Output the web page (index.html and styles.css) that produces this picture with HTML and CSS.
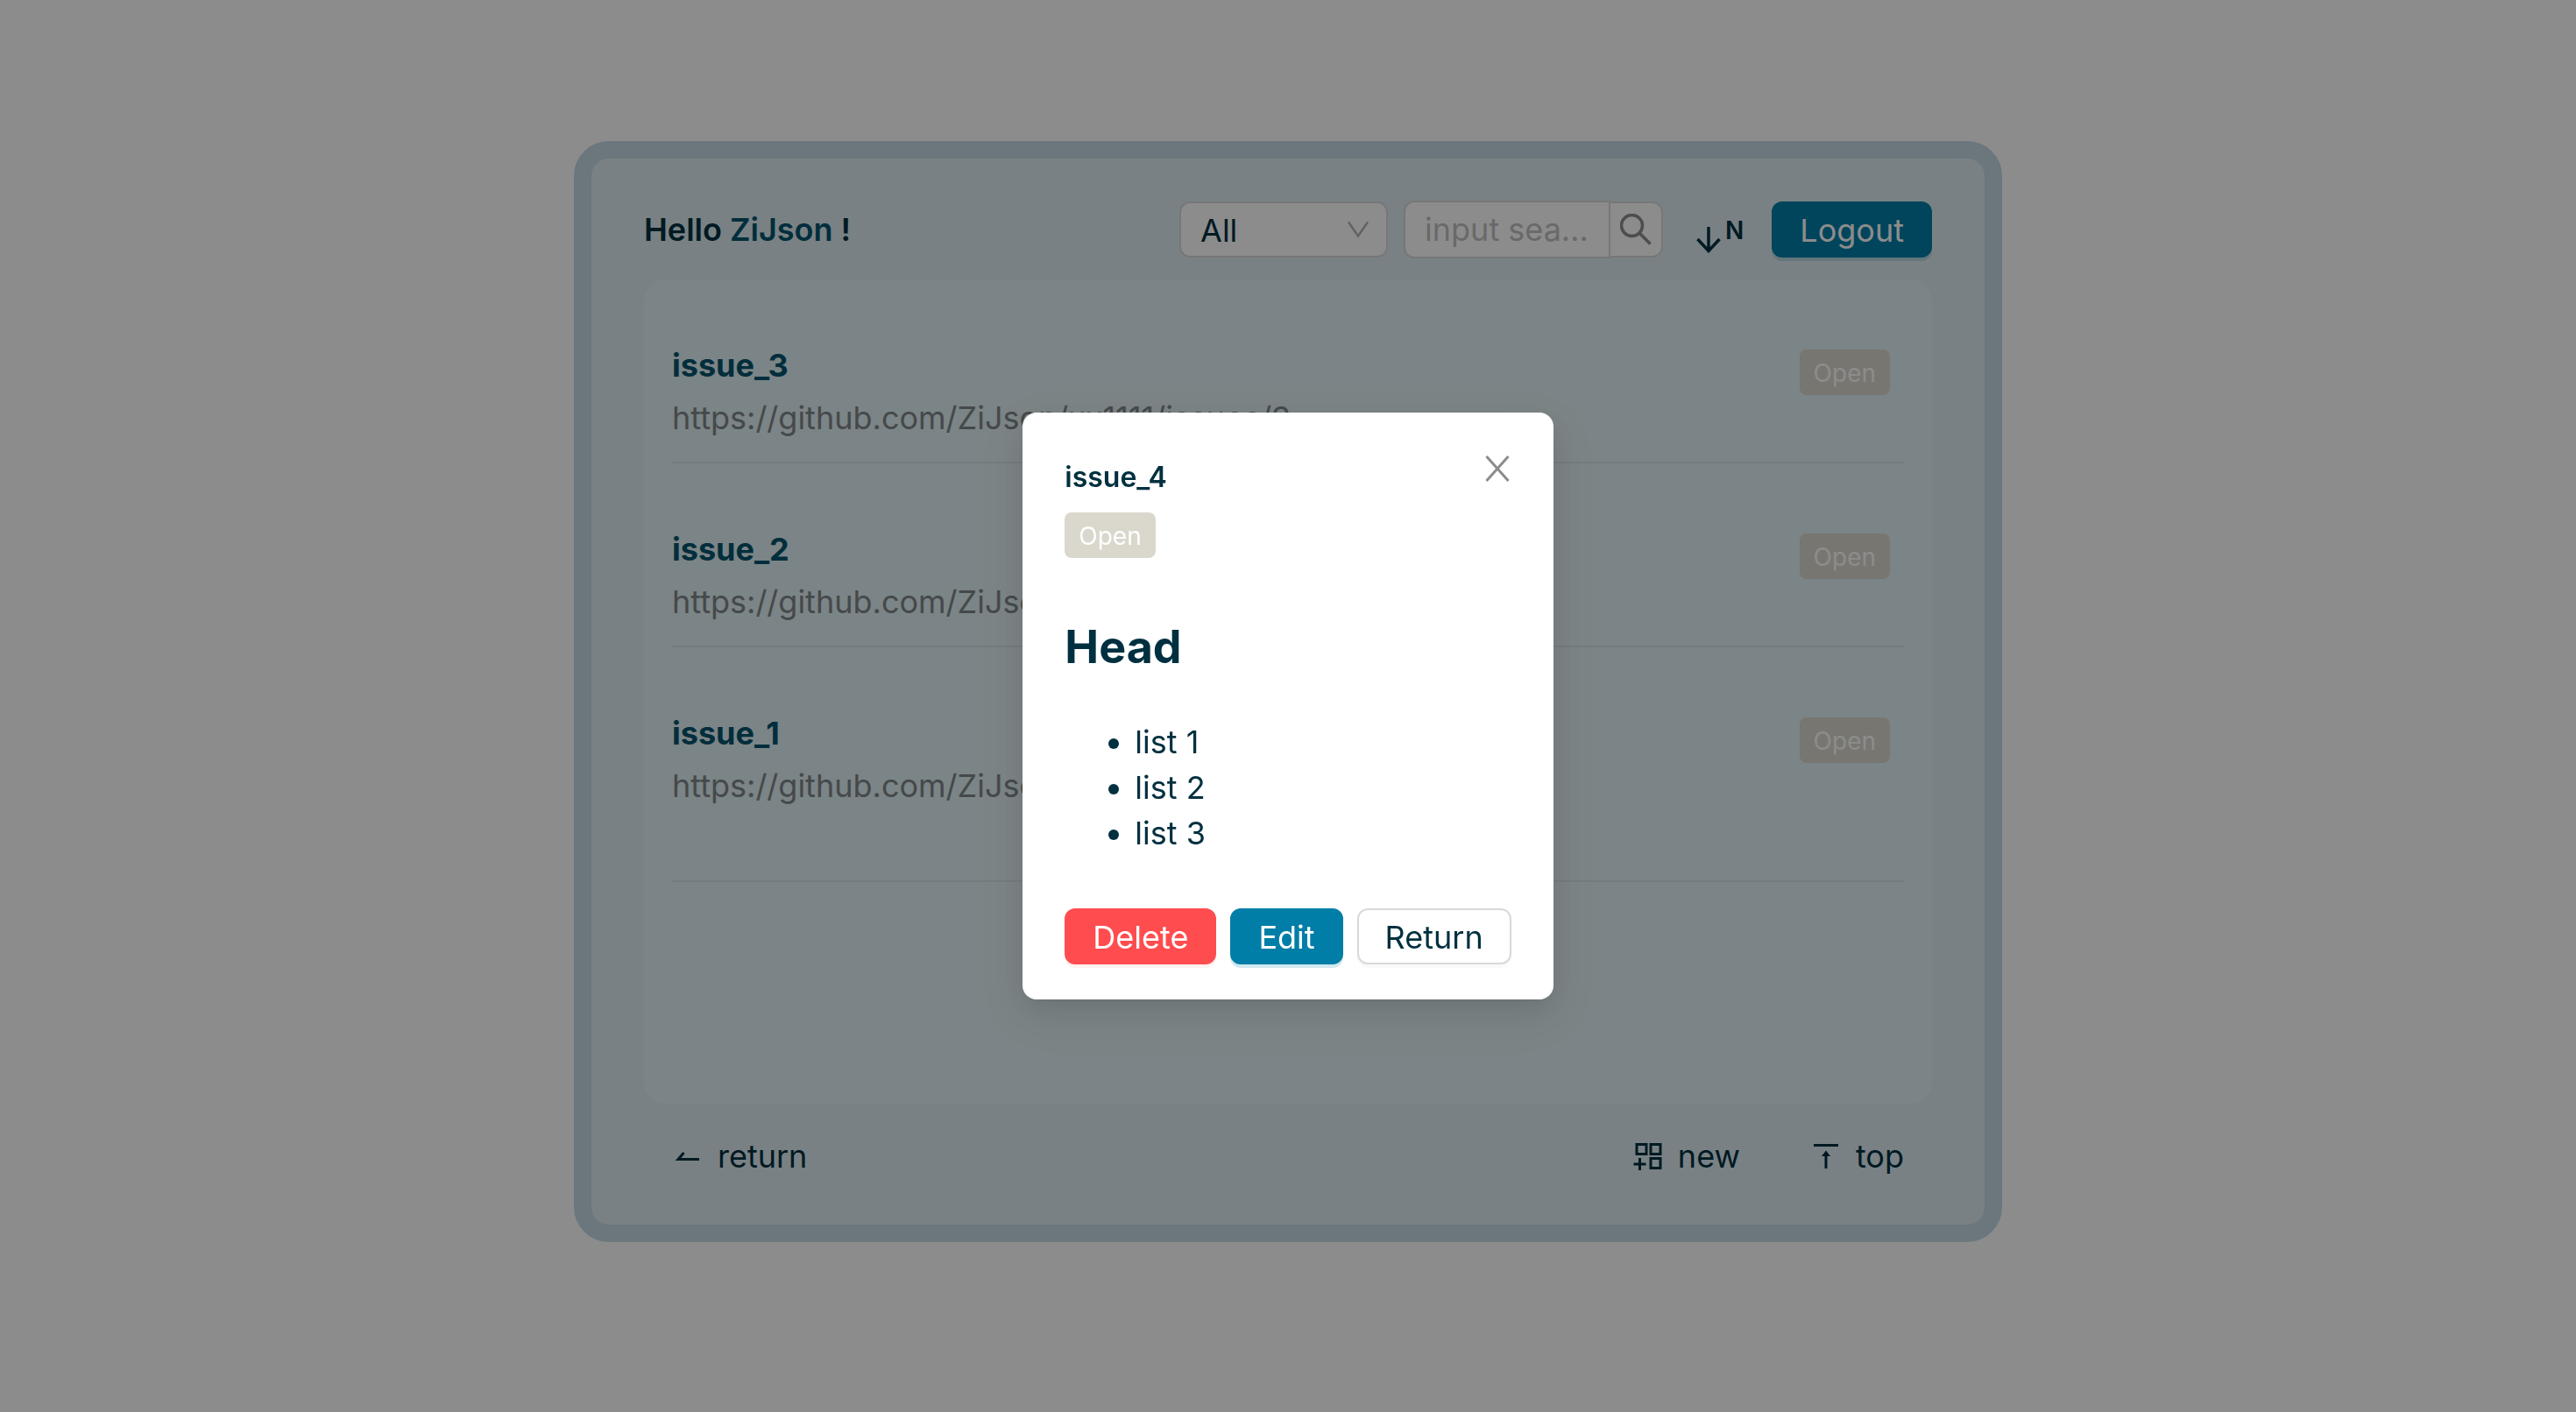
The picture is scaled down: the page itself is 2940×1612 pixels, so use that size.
FILE: index.html
```html
<!DOCTYPE html>
<html lang="en">
<head>
<meta charset="utf-8">
<meta name="viewport" content="width=device-width, initial-scale=1">
<title>Issues</title>
<link rel="stylesheet" href="styles.css">
</head>
<body>
<main class="board">
  <header class="topbar">
    <h1 class="greeting">Hello <a class="user" href="#">ZiJson</a> !</h1>
    <div class="filter">
      <select class="filter-select" aria-label="Filter by label">
        <option>All</option>
        <option>Open</option>
        <option>In Progress</option>
        <option>Done</option>
      </select>
      <svg class="chevron" viewBox="0 0 24 20" aria-hidden="true"><path d="M1 1.500L12 17.500L23 1.500" fill="none" stroke="currentColor" stroke-width="2.500"/></svg>
    </div>
    <form class="search">
      <input class="search-input" type="text" placeholder="input search text" aria-label="Search issues">
      <button class="search-button" type="button" aria-label="Search">
        <svg class="search-icon" viewBox="0 0 36 36" aria-hidden="true"><g fill="none" stroke="currentColor" stroke-width="3.500"><circle cx="13.500" cy="13.500" r="12"/><path d="M22 22L34.500 34.500"/></g></svg>
      </button>
    </form>
    <button class="sort" type="button" aria-label="Newest first">
      <svg class="sort-icon" viewBox="0 0 28 30" aria-hidden="true"><path d="M14 0V27M1.500 14L14 27.500L26.500 14" fill="none" stroke="currentColor" stroke-width="3.500"/></svg>
      <span class="sort-label">N</span>
    </button>
    <button class="button button-primary" type="button">Logout</button>
  </header>

  <ul class="issues">
    <li class="issue">
      <div class="issue-text">
        <a class="issue-title" href="#">issue_3</a>
        <p class="issue-url">https://github.com/ZiJson/xx1111/issues/3</p>
      </div>
      <span class="tag">Open</span>
    </li>
    <li class="issue">
      <div class="issue-text">
        <a class="issue-title" href="#">issue_2</a>
        <p class="issue-url">https://github.com/ZiJson/xx1111/issues/2</p>
      </div>
      <span class="tag">Open</span>
    </li>
    <li class="issue issue-last">
      <div class="issue-text">
        <a class="issue-title" href="#">issue_1</a>
        <p class="issue-url">https://github.com/ZiJson/xx1111/issues/1</p>
      </div>
      <span class="tag">Open</span>
    </li>
  </ul>

  <nav class="bottombar">
    <a class="nav-link nav-back" href="#">
      <svg class="nav-icon" viewBox="0 0 36 36" aria-hidden="true"><path d="M31 21.500H7L13.500 14" fill="none" stroke="currentColor" stroke-width="3"/></svg>
      return
    </a>
    <a class="nav-link" href="#">
      <svg class="nav-icon" viewBox="0 0 36 36" aria-hidden="true"><path d="M5 4.500H16V15.500H5ZM21 4.500H32V15.500H21ZM21 20.500H32V31.500H21ZM8.500 20V34M1.500 27H15.500" fill="none" stroke="currentColor" stroke-width="3"/></svg>
      new
    </a>
    <a class="nav-link" href="#">
      <svg class="nav-icon" viewBox="0 0 36 36" aria-hidden="true"><path d="M4 4H32V7H4ZM18 11.500L23 18H19.500V32H16.500V18H13Z" fill="currentColor"/></svg>
      top
    </a>
  </nav>
</main>

<div class="mask">
  <section class="modal" role="dialog" aria-modal="true" aria-labelledby="modal-title">
    <header class="modal-head">
      <div>
        <h2 class="modal-title" id="modal-title">issue_4</h2>
        <span class="tag">Open</span>
      </div>
      <button class="close" type="button" aria-label="Close">
        <svg class="close-icon" viewBox="0 0 28 30" aria-hidden="true"><path d="M1.500 1L26.500 29M26.500 1L1.500 29" fill="none" stroke="currentColor" stroke-width="3"/></svg>
      </button>
    </header>
    <div class="modal-body">
      <h3 class="body-heading">Head</h3>
      <ul class="body-list">
        <li>list 1</li>
        <li>list 2</li>
        <li>list 3</li>
      </ul>
    </div>
    <footer class="modal-actions">
      <button class="button button-danger" type="button">Delete</button>
      <button class="button button-primary" type="button">Edit</button>
      <button class="button" type="button">Return</button>
    </footer>
  </section>
</div>
</body>
</html>
```
FILE: styles.css
```css
:root {
  --ink: #00303f;
  --link: #00546e;
  --primary: #007ea7;
  --line: #d9d9d9;
}

* {
  box-sizing: border-box;
}

body {
  margin: 0;
  padding: 161px 24px 24px;
  background: #fff;
  color: var(--ink);
  font: 36px/52px Inter, "Liberation Sans", sans-serif;
}

a {
  color: inherit;
  text-decoration: none;
}

button,
input,
select {
  font: inherit;
  color: inherit;
}

svg {
  display: block;
}

.board {
  max-width: 1630px;
  margin: 0 auto;
  padding: 48px 60px 52px;
  border: 20px solid #c3d7e3;
  border-radius: 40px;
  background: #dcebf0;
}

.topbar {
  display: flex;
  align-items: center;
  height: 66px;
  margin-bottom: 24px;
}

.greeting {
  flex: 1;
  margin: 0;
  font-size: 36px;
  line-height: 52px;
  font-weight: 600;
}

.user {
  color: var(--link);
}

.filter {
  display: grid;
  align-items: center;
  width: 238px;
  margin-right: 18px;
}

.filter > * {
  grid-area: 1 / 1;
}

.filter-select {
  width: 100%;
  height: 64px;
  padding: 2px 22px 0;
  border: 2px solid var(--line);
  border-radius: 12px;
  background: #fff;
  appearance: none;
}

.chevron {
  justify-self: end;
  width: 24px;
  height: 20px;
  margin-right: 22px;
  color: #b3b3b3;
  pointer-events: none;
}

.search {
  display: flex;
  align-items: center;
  margin-right: 38px;
}

.search-input {
  width: 236px;
  height: 66px;
  padding: 0 22px;
  border: 2px solid var(--line);
  border-radius: 12px 0 0 12px;
  background: #fff;
  text-overflow: ellipsis;
}

.search-input::placeholder {
  color: #bfbfbf;
}

.search-button {
  display: grid;
  place-items: center;
  width: 62px;
  height: 64px;
  margin-left: -2px;
  padding: 0;
  border: 2px solid var(--line);
  border-radius: 0 12px 12px 0;
  background: #fff;
  color: #8c8c8c;
}

.search-icon {
  width: 36px;
  height: 36px;
}

.sort {
  display: flex;
  gap: 5px;
  margin-right: 32px;
  padding: 10px 0 0;
  border: 0;
  background: none;
}

.sort-icon {
  width: 28px;
  height: 30px;
  margin-top: 14px;
}

.sort-label {
  font-size: 28px;
  line-height: 36px;
  font-weight: 600;
}

.button {
  height: 64px;
  padding: 2px 30px 0;
  border: 2px solid var(--line);
  border-radius: 12px;
  background: #fff;
  box-shadow: 0 4px 0 rgba(0, 0, 0, 0.02);
}

.button-primary {
  border-color: var(--primary);
  background: var(--primary);
  color: #fff;
  box-shadow: 0 4px 0 rgba(0, 126, 167, 0.18);
}

.button-danger {
  border-color: #ff4d4f;
  background: #ff4d4f;
  color: #fff;
  box-shadow: 0 4px 0 rgba(255, 38, 5, 0.06);
}

.issues {
  min-height: 941px;
  margin: 0;
  padding: 0 32px;
  border-radius: 24px;
  background: #e1f0f4;
  list-style: none;
}

.issue {
  display: flex;
  align-items: flex-start;
  justify-content: space-between;
  height: 210px;
  padding: 72px 16px 0 0;
  border-bottom: 2px solid #d3e1e5;
}

.issue-last {
  height: 268px;
}

.issue-title {
  display: block;
  margin-bottom: 8px;
  color: var(--link);
  font-weight: 700;
}

.issue-url {
  margin: 0;
  color: #7f8688;
}

.tag {
  display: block;
  width: fit-content;
  padding: 2px 16px 0;
  border-radius: 8px;
  background: #dad7cd;
  color: #fff;
  font-size: 28px;
  line-height: 50px;
}

.issue .tag {
  margin-top: 8px;
}

.bottombar {
  display: flex;
  gap: 80px;
  padding: 34px 32px 0;
}

.nav-link {
  display: flex;
  align-items: center;
  gap: 16px;
}

.nav-back {
  margin-right: auto;
}

.nav-icon {
  width: 36px;
  height: 36px;
}

.mask {
  position: fixed;
  inset: 0;
  display: flex;
  align-items: center;
  justify-content: center;
  background: rgba(0, 0, 0, 0.45);
}

.modal {
  padding: 40px 48px;
  border-radius: 16px;
  background: #fff;
  box-shadow: 0 12px 32px rgba(0, 0, 0, 0.08), 0 6px 12px -8px rgba(0, 0, 0, 0.12), 0 18px 56px 16px rgba(0, 0, 0, 0.05);
}

.modal-head {
  display: flex;
  justify-content: space-between;
  align-items: flex-start;
}

.modal-title {
  margin: 8px 0 14px;
  font-size: 32px;
  line-height: 52px;
  font-weight: 600;
}

.close {
  padding: 9px 2px;
  border: 0;
  background: none;
  color: #8c8c8c;
}

.close-icon {
  width: 28px;
  height: 30px;
}

.body-heading {
  margin: 72px 0 52px;
  font-size: 52px;
  line-height: 60px;
  font-weight: 700;
}

.body-list {
  margin: 0 0 60px;
  padding-left: 80px;
}

.modal-actions {
  display: flex;
  gap: 16px;
}
```
